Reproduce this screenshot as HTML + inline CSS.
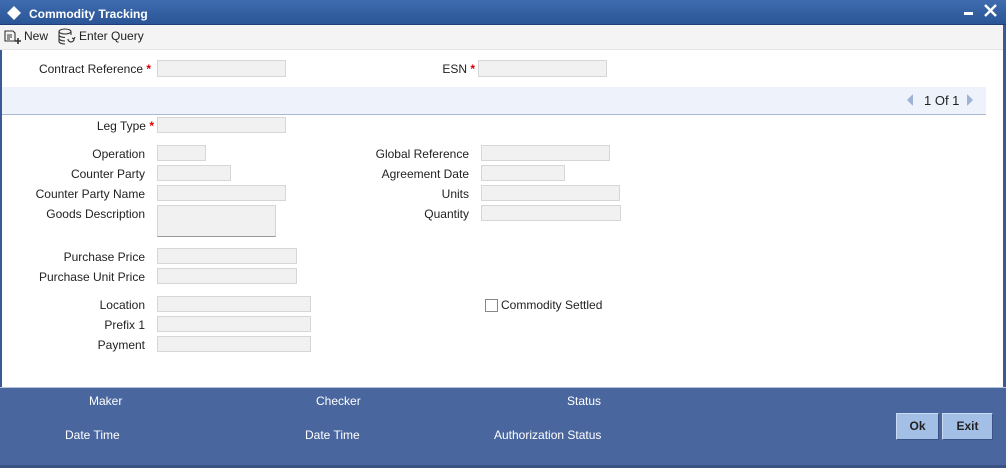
<!DOCTYPE html>
<html><head><meta charset="utf-8"><style>
*{margin:0;padding:0;box-sizing:border-box}
body{width:1006px;height:468px;overflow:hidden;background:#fff;font-family:"Liberation Sans",Arial,sans-serif;font-size:12px;color:#222;position:relative}
.a{position:absolute}
.title{left:0;top:0;width:1006px;height:25px;background:linear-gradient(#3f6cb0,#2a5596);border-bottom:1px solid #1d3f75}
.tb{left:0;top:25px;width:1003px;height:25px;background:#f4f4f4;border-bottom:1px solid #e4e4e4}
.lb{text-align:right;white-space:nowrap;line-height:14px}
.in{background:#f1f1f1;border:1px solid #d6d6d6;height:16px}
.st{color:#d00;font-weight:bold}
.ft{color:#fff;line-height:14px;white-space:nowrap}
.btn{background:#a3bfe6;border:1px solid #3a5284;border-top-color:#c8dbf3;border-left-color:#c8dbf3;height:27px;font-weight:bold;color:#222;text-align:center;line-height:25px;font-size:12px}
</style></head><body>
<div class="a" style="left:0;top:0;width:2px;height:468px;background:#3a5a95"></div>
<div class="a" style="left:1003px;top:0;width:3px;height:468px;background:#3a5a95"></div>
<div class="a title"></div>
<svg class="a" style="left:7px;top:6px" width="14" height="14"><path d="M7 0L14 7L7 14L0 7Z" fill="#fff"/></svg>
<div class="a" style="left:29px;top:7px;color:#fff;font-weight:bold;font-size:12px">Commodity Tracking</div>
<div class="a" style="left:964px;top:12px;width:9px;height:3px;background:#fff"></div>
<svg class="a" style="left:984px;top:4px" width="13" height="13"><path d="M1 1L12 12M12 1L1 12" stroke="#fff" stroke-width="2.4"/></svg>
<div class="a tb"></div>
<svg class="a" style="left:4px;top:29px" width="18" height="16"><path d="M1 2H9L11 4V12H1Z M3 6H8M3 8H8M3 10H6" fill="none" stroke="#333" stroke-width="1.1"/><path d="M14 9V15M11 12H17" stroke="#333" stroke-width="1.6"/></svg>
<div class="a" style="left:24px;top:29px;font-size:12px">New</div>
<svg class="a" style="left:58px;top:28px" width="18" height="17"><ellipse cx="7" cy="3.5" rx="6" ry="2.5" fill="none" stroke="#333" stroke-width="1.1"/><path d="M1 3.5V13.5C1 15 4 16 7 16M13 3.5V7M1 7C1 8.5 4 9.5 7 9.5M1 10.5C1 12 4 13 7 13" fill="none" stroke="#333" stroke-width="1.1"/><path d="M10 11A3 3 0 1 0 16 11M16 11L17 9M16 11L14 10" fill="none" stroke="#333" stroke-width="1.2"/></svg>
<div class="a" style="left:79px;top:29px;font-size:12px">Enter Query</div>

<div class="a lb" style="right:855px;top:62px">Contract Reference <span class="st">*</span></div>
<div class="a in" style="left:157px;top:60px;width:129px;height:17px"></div>
<div class="a lb" style="right:531px;top:62px">ESN <span class="st">*</span></div>
<div class="a in" style="left:478px;top:60px;width:129px;height:17px"></div>

<div class="a" style="left:2px;top:87px;width:984px;height:28px;background:#eef2fb;border-bottom:1px solid #a9b9d3"></div>
<svg class="a" style="left:907px;top:94px" width="7" height="12"><path d="M6 0V12L0 6Z" fill="#9fb3d6"/></svg>
<div class="a" style="left:924px;top:93px;font-size:13px">1 Of 1</div>
<svg class="a" style="left:967px;top:94px" width="7" height="12"><path d="M0 0V12L6 6Z" fill="#9fb3d6"/></svg>

<div class="a lb" style="right:852px;top:119px">Leg Type <span class="st">*</span></div>
<div class="a in" style="left:157px;top:117px;width:129px"></div>

<div class="a lb" style="right:861px;top:147px">Operation</div>
<div class="a in" style="left:157px;top:145px;width:49px"></div>
<div class="a lb" style="right:861px;top:167px">Counter Party</div>
<div class="a in" style="left:157px;top:165px;width:74px"></div>
<div class="a lb" style="right:861px;top:187px">Counter Party Name</div>
<div class="a in" style="left:157px;top:185px;width:129px"></div>
<div class="a lb" style="right:861px;top:207px">Goods Description</div>
<div class="a in" style="left:157px;top:205px;width:119px;height:32px;border-bottom-color:#999"></div>

<div class="a lb" style="right:861px;top:250px">Purchase Price</div>
<div class="a in" style="left:157px;top:248px;width:140px"></div>
<div class="a lb" style="right:861px;top:270px">Purchase Unit Price</div>
<div class="a in" style="left:157px;top:268px;width:140px"></div>

<div class="a lb" style="right:861px;top:298px">Location</div>
<div class="a in" style="left:157px;top:296px;width:154px"></div>
<div class="a lb" style="right:861px;top:318px">Prefix 1</div>
<div class="a in" style="left:157px;top:316px;width:154px"></div>
<div class="a lb" style="right:861px;top:338px">Payment</div>
<div class="a in" style="left:157px;top:336px;width:154px"></div>

<div class="a lb" style="right:537px;top:147px">Global Reference</div>
<div class="a in" style="left:481px;top:145px;width:129px"></div>
<div class="a lb" style="right:537px;top:167px">Agreement Date</div>
<div class="a in" style="left:481px;top:165px;width:84px"></div>
<div class="a lb" style="right:537px;top:187px">Units</div>
<div class="a in" style="left:481px;top:185px;width:139px"></div>
<div class="a lb" style="right:537px;top:207px">Quantity</div>
<div class="a in" style="left:481px;top:205px;width:140px"></div>

<div class="a" style="left:485px;top:299px;width:13px;height:13px;border:1px solid #888;background:#fff"></div>
<div class="a lb" style="left:501px;top:298px">Commodity Settled</div>

<div class="a" style="left:0;top:387px;width:1006px;height:81px;background:#49669e;border-top:1px solid #b5c4dc"></div>
<div class="a" style="left:0;top:465px;width:1006px;height:3px;background:#3a5383"></div>
<div class="a ft" style="left:89px;top:394px">Maker</div>
<div class="a ft" style="left:65px;top:428px">Date Time</div>
<div class="a ft" style="left:316px;top:394px">Checker</div>
<div class="a ft" style="left:305px;top:428px">Date Time</div>
<div class="a ft" style="left:567px;top:394px">Status</div>
<div class="a ft" style="left:494px;top:428px">Authorization Status</div>
<div class="a btn" style="left:896px;top:413px;width:43px">Ok</div>
<div class="a btn" style="left:942px;top:413px;width:51px">Exit</div>
</body></html>
